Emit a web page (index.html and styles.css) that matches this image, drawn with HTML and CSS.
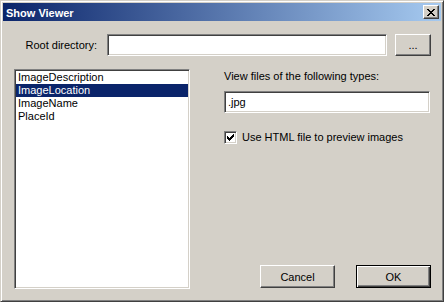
FILE: index.html
```html
<!DOCTYPE html>
<html lang="en">
<head>
    <meta charset="UTF-8">
    <meta name="viewport" content="width=device-width, initial-scale=1.0">
    <title>Show Viewer</title>
    <link rel="stylesheet" href="styles.css">
</head>
<body>
    <div class="window">
        <div class="titlebar">
            <span class="title">Show Viewer</span>
            <button class="close-btn">
                <svg width="8" height="7" viewBox="0 0 8 7" shape-rendering="crispEdges">
                    <path fill="#000" d="M0 0h2v1h-2z M6 0h2v1h-2z M1 1h2v1h-2z M5 1h2v1h-2z M2 2h4v1h-4z M3 3h2v1h-2z M2 4h4v1h-4z M1 5h2v1h-2z M5 5h2v1h-2z M0 6h2v1h-2z M6 6h2v1h-2z"/>
                </svg>
            </button>
        </div>

        <div class="content">
            <div class="root-row">
                <span class="root-label">Root directory:</span>
                <div class="field root-field"></div>
                <button class="btn browse-btn">...</button>
            </div>

            <div class="main-row">
                <ul class="listbox">
                    <li>ImageDescription</li>
                    <li class="selected">ImageLocation</li>
                    <li>ImageName</li>
                    <li>PlaceId</li>
                </ul>

                <div class="options">
                    <div class="types-label">View files of the following types:</div>
                    <div class="field types-field">.jpg</div>
                    <div class="check-row">
                        <span class="checkbox">
                            <svg width="7" height="7" viewBox="0 0 7 7" shape-rendering="crispEdges">
                                <path fill="#000" d="M6 0h1v1h-1z M5 1h2v1h-2z M0 2h1v1h-1z M4 2h3v1h-3z M0 3h2v1h-2z M3 3h3v1h-3z M0 4h5v1h-5z M1 5h3v1h-3z M2 6h1v1h-1z"/>
                            </svg>
                        </span>
                        <span>Use HTML file to preview images</span>
                    </div>
                    <div class="actions">
                        <button class="btn">Cancel</button>
                        <button class="btn default-btn">OK</button>
                    </div>
                </div>
            </div>
        </div>
    </div>
</body>
</html>
```

FILE: styles.css
```css
body {
    margin: 0;
    font-family: "Liberation Sans", Arial, sans-serif;
    font-size: 11px;
    color: #000;
    background: #d4d0c8;
}
.window {
    box-sizing: border-box;
    width: 444px;
    height: 302px;
    background: #d4d0c8;
    border: 1px solid;
    border-color: #d4d0c8 #404040 #404040 #d4d0c8;
    box-shadow: inset 1px 1px #ffffff, inset -1px -1px #808080;
    padding: 2px;
}

/* Title bar */
.titlebar {
    height: 18px;
    display: flex;
    align-items: center;
    justify-content: space-between;
    background: linear-gradient(to right, #0a246a, #a6caf0);
    padding: 0 2px 0 3px;
}
.title {
    color: #ffffff;
    font-weight: bold;
    font-size: 11px;
    line-height: 18px;
    padding-top: 1px;
}
.close-btn {
    box-sizing: border-box;
    width: 16px;
    height: 14px;
    padding: 0;
    display: flex;
    align-items: center;
    justify-content: center;
    background: #d4d0c8;
    border: 1px solid;
    border-color: #ffffff #404040 #404040 #ffffff;
    box-shadow: inset -1px -1px #808080;
}
.close-btn svg {
    display: block;
}

/* Content */
.content {
    padding: 13px 10px 0 11px;
}
.root-row {
    display: flex;
    align-items: center;
    height: 22px;
}
.root-label {
    width: 83px;
    text-align: right;
    margin-right: 10px;
}
.field {
    box-sizing: border-box;
    height: 22px;
    background: #ffffff;
    border: 1px solid;
    border-color: #808080 #ffffff #ffffff #808080;
    box-shadow: inset 1px 1px #404040, inset -1px -1px #d4d0c8;
}
.root-field {
    width: 280px;
    margin-right: 8px;
}
.btn {
    box-sizing: border-box;
    height: 23px;
    width: 75px;
    padding: 0;
    font-family: "Liberation Sans", Arial, sans-serif;
    font-size: 11px;
    color: #000;
    background: #d4d0c8;
    border: 1px solid;
    border-color: #ffffff #404040 #404040 #ffffff;
    box-shadow: inset -1px -1px #808080;
}
.browse-btn {
    width: 36px;
    height: 22px;
}
.default-btn {
    border-color: #000000;
    box-shadow: inset 1px 1px #ffffff, inset -1px -1px #404040, inset -2px -2px #808080;
}

.main-row {
    display: grid;
    grid-template-columns: 176px 207px;
    column-gap: 34px;
    margin-top: 13px;
}
.listbox {
    box-sizing: border-box;
    height: 220px;
    margin: 0;
    padding: 1px;
    list-style: none;
    background: #ffffff;
    border: 1px solid;
    border-color: #808080 #ffffff #ffffff #808080;
    box-shadow: inset 1px 1px #404040, inset -1px -1px #d4d0c8;
}
.listbox li {
    line-height: 13px;
    padding-left: 2px;
}
.listbox li.selected {
    background: #0a246a;
    color: #ffffff;
}

.options {
    display: flex;
    flex-direction: column;
    height: 220px;
}
.types-label {
    line-height: 13px;
    margin-top: 1px;
}
.types-field {
    width: 206px;
    margin-top: 8px;
    line-height: 20px;
    padding-left: 3px;
}
.check-row {
    display: flex;
    align-items: center;
    margin-top: 18px;
    line-height: 13px;
}
.checkbox {
    box-sizing: border-box;
    width: 13px;
    height: 13px;
    margin-right: 5px;
    padding: 2px;
    background: #ffffff;
    border: 1px solid;
    border-color: #808080 #ffffff #ffffff #808080;
    box-shadow: inset 1px 1px #404040, inset -1px -1px #d4d0c8;
}
.checkbox svg {
    display: block;
}
.actions {
    display: flex;
    justify-content: flex-end;
    gap: 21px;
    margin-top: auto;
    margin-bottom: 1px;
}
```
